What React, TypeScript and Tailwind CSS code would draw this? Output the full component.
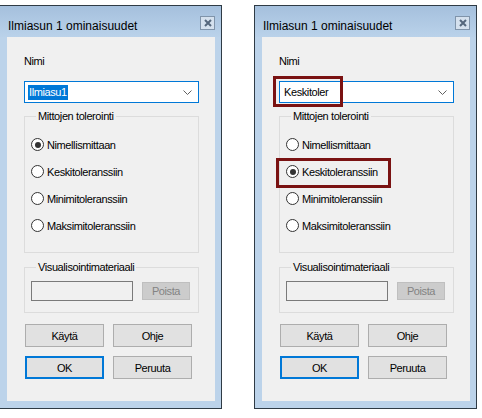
import React from "react";

const options = ["Nimellismittaan", "Keskitoleranssiin", "Minimitoleranssiin", "Maksimitoleranssiin"];

function Radio({ checked }: { checked: boolean }) {
  return (
    <span className="w-[13px] h-[13px] rounded-full border border-[#333333] bg-white flex items-center justify-center shrink-0">
      {checked && <span className="w-[6px] h-[6px] rounded-full bg-[#333333]" />}
    </span>
  );
}

function Button({ label, primary }: { label: string; primary?: boolean }) {
  return (
    <div
      className={
        primary
          ? "w-[79px] h-[23px] border-2 border-[#0078d7] bg-[#e1e1e1] flex items-center justify-center"
          : "w-[79px] h-[23px] border border-[#adadad] bg-[#e1e1e1] flex items-center justify-center"
      }
    >
      {label}
    </div>
  );
}

function Dialog({
  value,
  highlighted,
  selected,
  marked,
  shift,
}: {
  value: string;
  highlighted: boolean;
  selected: number;
  marked?: boolean;
  shift?: boolean;
}) {
  return (
    <div
      className={
        (shift ? "-ml-px " : "") +
        "w-[223px] h-[404px] shrink-0 border border-[#2f3b45] bg-[#bcd3ea] flex flex-col"
      }
    >
      {/* title bar */}
      <div className="h-[31px] flex items-start pl-[8px] pr-[6px] bg-gradient-to-b from-[#a5c0dd] to-[#bad2ea]">
        <span className="mt-[13px] text-[12px] leading-[14px] text-black">Ilmiasun 1 ominaisuudet</span>
        <div className="ml-auto mt-[10px] w-[15px] h-[14px] border border-[#8094aa] bg-[#d5e1ee] flex items-center justify-center">
          <svg width="8" height="8" viewBox="0 0 8 8">
            <path d="M1 1L7 7M7 1L1 7" stroke="#55677c" strokeWidth="2" />
          </svg>
        </div>
      </div>

      {/* content */}
      <div className="relative ml-[7px] w-[208px] h-[364px] bg-[#f0f0f0] pl-[17px] pt-[17px] flex flex-col text-[11px] tracking-[-0.4px] leading-[14px] text-black">
        <div>Nimi</div>

        <div className="mt-[13px] w-[175px] h-[22px] border border-[#0078d7] bg-white flex items-center pl-[3px] pr-[6px]">
          <span className={highlighted ? "bg-[#0078d7] text-white px-px leading-[15px]" : "px-px leading-[15px]"}>
            {value}
          </span>
          <svg className="ml-auto" width="9" height="5" viewBox="0 0 9 5">
            <polyline points="0.5,0.5 4.5,4.5 8.5,0.5" fill="none" stroke="#606060" strokeWidth="1" />
          </svg>
        </div>

        <fieldset className="mt-[6px] w-[175px] border border-[#dcdcdc] pl-[6px] pt-[8px] pb-[13px]">
          <legend className="ml-[5px] px-[2px] leading-[14px]">Mittojen tolerointi</legend>
          {options.map((o, i) => (
            <div key={o} className="h-[27px] flex items-center gap-[3px]">
              <Radio checked={i === selected} />
              <span>{o}</span>
            </div>
          ))}
        </fieldset>

        <fieldset className="mt-[7px] w-[175px] border border-[#dcdcdc] pl-[6px] pt-[7px] pb-[11px]">
          <legend className="ml-[5px] px-[2px] leading-[14px]">Visualisointimateriaali</legend>
          <div className="flex items-center gap-[9px]">
            <div className="w-[102px] h-[20px] border border-[#7a7a7a] bg-[#f0f0f0]" />
            <div className="w-[48px] h-[18px] border border-[#bfbfbf] bg-[#cccccc] text-[#838383] flex items-center justify-center">
              Poista
            </div>
          </div>
        </fieldset>

        <div className="mt-[11px] ml-px flex gap-[9px]">
          <Button label="Käytä" />
          <Button label="Ohje" />
        </div>
        <div className="mt-[9px] ml-px flex gap-[9px]">
          <Button label="OK" primary />
          <Button label="Peruuta" />
        </div>

        {marked && (
          <>
            <div className="absolute left-[11px] top-[39px] w-[70px] h-[31px] border-[3px] border-[#7a1212]" />
            <div className="absolute left-[14px] top-[121px] w-[115px] h-[30px] border-[3px] border-[#7a1212]" />
          </>
        )}
      </div>
    </div>
  );
}

export default function App() {
  return (
    <div
      className="w-[482px] h-[418px] bg-white flex gap-[32px] pt-[5px] overflow-hidden"
      style={{ fontFamily: '"Liberation Sans", Arial, sans-serif' }}
    >
      <Dialog value="Ilmiasu1" highlighted selected={0} shift />
      <Dialog value="Keskitoler" highlighted={false} selected={1} marked />
    </div>
  );
}
